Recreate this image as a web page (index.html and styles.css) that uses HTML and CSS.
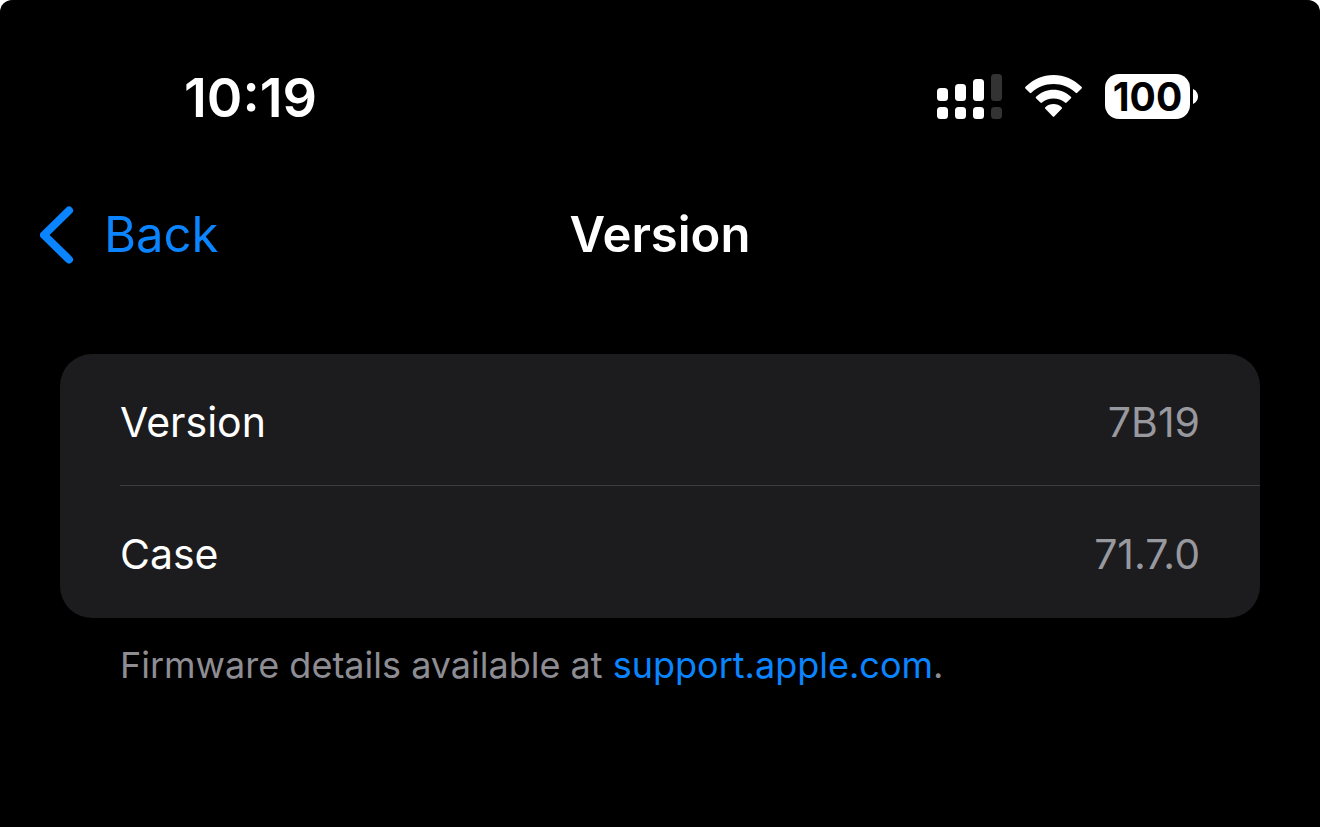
FILE: index.html
```html
<!DOCTYPE html>
<html lang="en">
<head>
    <meta charset="UTF-8">
    <meta name="viewport" content="width=device-width, initial-scale=1.0">
    <title>Version</title>
    <link rel="stylesheet" href="styles.css">
</head>
<body>
    <div class="screen">
        <div class="status-bar">
            <time class="clock">10:19</time>
            <div class="status-icons">
                <!-- Dual SIM signal -->
                <svg class="signal" width="66" height="46" viewBox="0 0 66 46" fill="#fff" aria-label="Signal">
                    <rect x="0" y="14" width="11" height="13" rx="3.5"/>
                    <rect x="18" y="10" width="11" height="17" rx="3.5"/>
                    <rect x="36" y="5" width="11" height="22" rx="3.5"/>
                    <rect x="54" y="0" width="11" height="27" rx="3.5" fill="#333"/>
                    <rect x="0" y="33" width="11" height="12" rx="3.5"/>
                    <rect x="18" y="33" width="11" height="12" rx="3.5"/>
                    <rect x="36" y="33" width="11" height="12" rx="3.5"/>
                    <rect x="54" y="33" width="11" height="12" rx="3.5" fill="#333"/>
                </svg>
                <svg class="wifi" width="58" height="46" viewBox="0 0 58 46" fill="#fff" aria-label="Wi-Fi">
                    <path d="M.4 14.4Q-.3 13.600.5 12.800C8.200 5.400 18 1 28.500 1S48.800 5.400 56.500 12.800Q57.300 13.600 56.600 14.400L52.200 18.800Q51.500 19.500 50.700 18.800C44.700 13.300 37 10.100 28.500 10.100S12.300 13.300 6.300 18.800Q5.500 19.500 4.800 18.800Z"/>
                    <path d="M11 24.200Q10.300 23.400 11.100 22.700C15.900 18.300 22 15.700 28.500 15.700S41.100 18.300 45.900 22.700Q46.700 23.400 46 24.200L41.600 28.600Q40.800 29.300 40 28.600C36.900 26 32.900 24.500 28.500 24.500S20.100 26 17 28.600Q16.200 29.300 15.400 28.600Z"/>
                    <path d="M20.300 34.800Q19.500 34 20.300 33.200C22.500 31.200 25.400 30 28.500 30S34.500 31.200 36.700 33.200Q37.500 34 36.700 34.800L29.200 42.500Q28.500 43.200 27.800 42.500Z"/>
                </svg>
                <div class="battery">
                    <span class="battery-level">100</span>
                    <svg width="5" height="15" viewBox="0 0 5 15" fill="#fff" aria-hidden="true">
                        <path d="M0 0C3 1.200 5 4 5 7.500S3 13.800 0 15Z"/>
                    </svg>
                </div>
            </div>
        </div>

        <header class="nav-bar">
            <button class="back" type="button">
                <svg width="34" height="58" viewBox="0 0 34 58" fill="none" stroke="currentColor" stroke-width="8" stroke-linecap="round" stroke-linejoin="round" aria-hidden="true">
                    <path d="M29 4.500L4 29L29 53.500"/>
                </svg>
                Back
            </button>
            <h1>Version</h1>
        </header>

        <main>
            <dl class="group">
                <div class="row">
                    <dt>Version</dt>
                    <dd>7B19</dd>
                </div>
                <div class="row">
                    <dt>Case</dt>
                    <dd>71.7.0</dd>
                </div>
            </dl>
            <p class="footnote">Firmware details available at <a href="#">support.apple.com</a>.</p>
        </main>
    </div>
</body>
</html>
```

FILE: styles.css
```css
body {
    margin: 0;
    background-color: white;
    font-family: Inter, "Liberation Sans", sans-serif;
}

.screen {
    box-sizing: border-box;
    min-height: 100vh;
    padding-top: 74px;
    border-radius: 12px 12px 0 0;
    background-color: black;
    color: white;
}

/* Status bar */
.status-bar {
    display: flex;
    justify-content: space-between;
    align-items: flex-start;
    height: 46px;
    padding: 0 122px 0 184px;
}

.clock {
    font-size: 54px;
    font-weight: 600;
    line-height: 48px;
}

.status-icons {
    display: flex;
    align-items: flex-start;
    gap: 22px;
}

.battery {
    display: flex;
    align-items: center;
    gap: 3px;
}

.battery-level {
    width: 85px;
    border-radius: 14px;
    background-color: white;
    color: black;
    font-size: 39px;
    font-weight: 700;
    line-height: 45px;
    text-align: center;
}

/* Navigation */
.nav-bar {
    display: grid;
    grid-template-columns: 1fr auto 1fr;
    align-items: center;
    height: 80px;
    margin-top: 75px;
    padding: 0 40px;
}

.back {
    display: flex;
    align-items: center;
    justify-self: start;
    gap: 30px;
    padding: 0;
    border: none;
    background: none;
    color: #0a84ff;
    font-family: inherit;
    font-size: 49px;
    line-height: 60px;
    cursor: pointer;
}

h1 {
    margin: 0;
    font-size: 49px;
    font-weight: 600;
    line-height: 60px;
}

/* Grouped list */
main {
    padding: 79px 60px 0;
}

.group {
    margin: 0;
    border-radius: 32px;
    background-color: #1c1c1e;
    font-size: 41px;
    line-height: 52px;
}

.row {
    display: flex;
    justify-content: space-between;
    align-items: center;
    box-sizing: border-box;
    height: 132px;
    margin-left: 60px;
    padding: 4px 60px 0 0;
}

.row:first-child {
    border-bottom: 1px solid #3d3d41;
}

dd {
    margin: 0;
    color: #98989f;
}

.footnote {
    margin: 24px 60px 0;
    color: #8d8d93;
    font-size: 36px;
    line-height: 46px;
}

a {
    color: #0a84ff;
    text-decoration: none;
}
```
